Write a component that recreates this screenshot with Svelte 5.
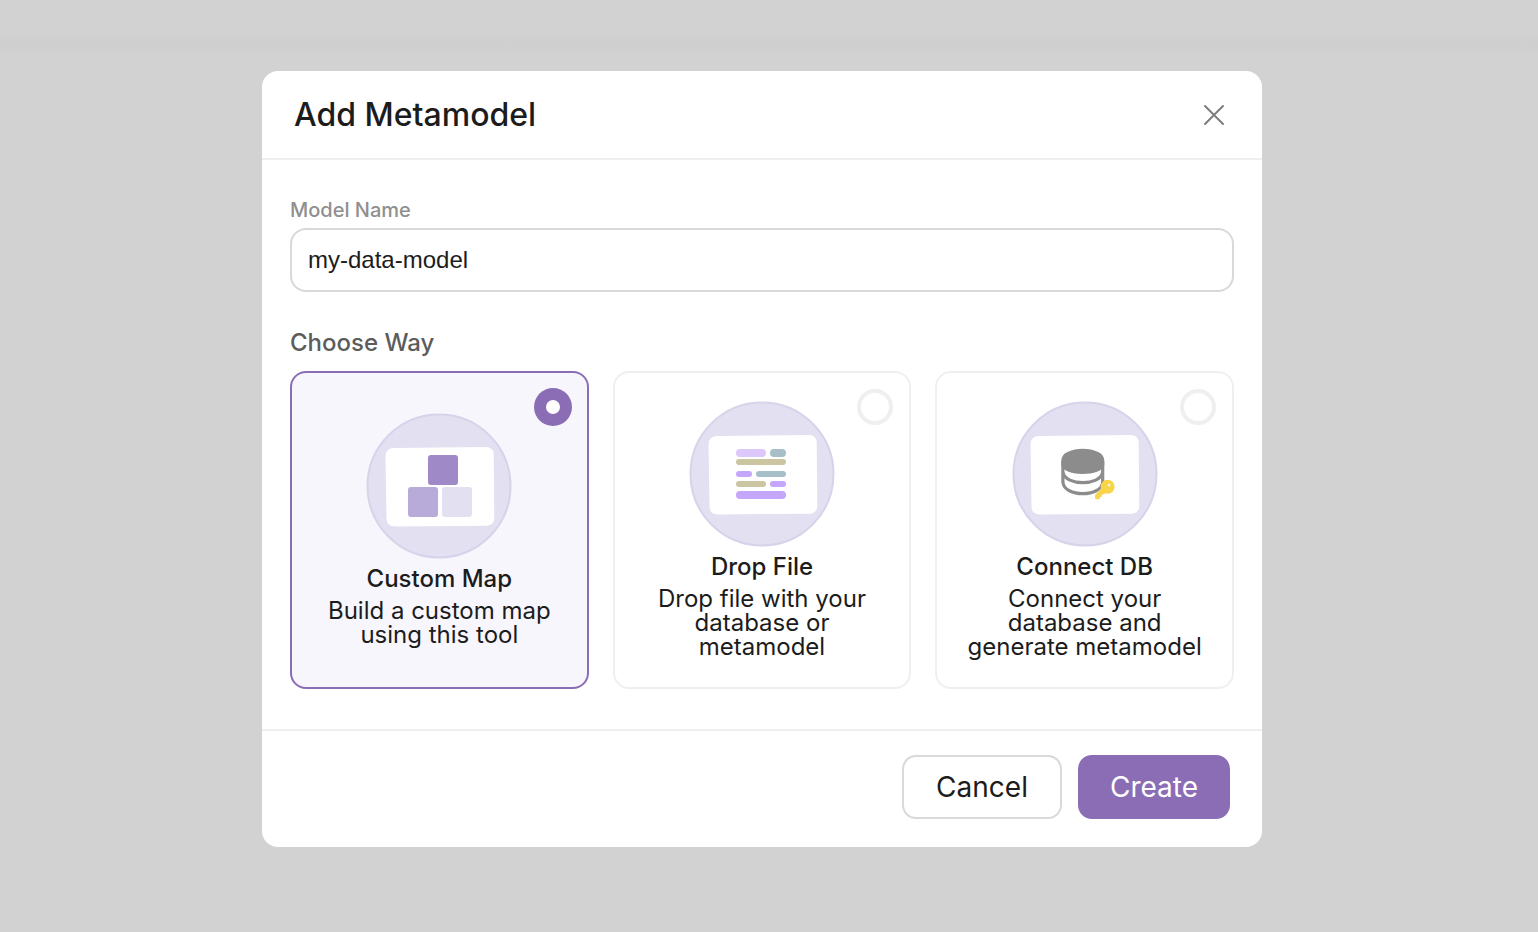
<script>
  let name = $state('my-data-model');
  let way = $state('custom');

  const ways = [
    { id: 'custom', title: 'Custom Map', text: 'Build a custom map using this tool' },
    { id: 'file', title: 'Drop File', text: 'Drop file with your database or metamodel' },
    { id: 'db', title: 'Connect DB', text: 'Connect your database and generate metamodel' }
  ];

  const purple = '#c4a6fa';
  const khaki = '#cbc5a1';
  const teal = '#a6bfc8';
  const bars = [
    [47, 48, 30, 8, '#dcc8fb'],
    [81, 48, 16, 8, teal],
    [47, 58, 50, 6, khaki],
    [47, 70, 16, 6, purple],
    [67, 70, 30, 6, teal],
    [47, 80, 30, 6, khaki],
    [81, 80, 16, 6, purple],
    [47, 90, 50, 8, purple]
  ];
</script>

<div class="overlay">
  <div class="modal" role="dialog" aria-modal="true" aria-labelledby="dialog-title">
    <header>
      <h1 id="dialog-title">Add Metamodel</h1>
      <button class="close" type="button" aria-label="Close">
        <svg viewBox="0 0 24 24" width="24" height="24">
          <path d="M3 3l18 18M21 3l-18 18" fill="none" stroke="#7d7d7d" stroke-width="2" stroke-linecap="round" />
        </svg>
      </button>
    </header>

    <div class="body">
      <label class="name-label" for="model-name">Model Name</label>
      <input class="name" id="model-name" type="text" bind:value={name} />

      <fieldset>
        <legend>Choose Way</legend>
        <div class="cards">
          {#each ways as item (item.id)}
            <label class="card" class:selected={way === item.id}>
              <input class="radio" type="radio" name="way" value={item.id} bind:group={way} />
              <svg class="art" viewBox="0 0 146 146" width="146" height="146" aria-hidden="true">
                <circle cx="73" cy="73" r="71.5" fill="#e3e0f1" stroke="#d8d2ea" stroke-width="2" />
                <path
                  transform={item.id === 'db' ? 'translate(-1 0)' : undefined}
                  d="M28.5 34.9L119.5 34Q127.6 34 127.7 42L128.3 104.5Q128.3 112.5 120.3 112.7L29.5 113.5Q20.6 113.5 20.5 105.5L19.5 43.5Q19.5 35 28.5 34.9Z"
                  fill="#fff"
                />
                {#if item.id === 'custom'}
                  <rect x="62" y="42" width="30" height="30" rx="3" fill="#9f8ac7" />
                  <rect x="42" y="74" width="30" height="30" rx="3" fill="#b8abd9" />
                  <rect x="76" y="74" width="30" height="30" rx="3" fill="#e3e0f1" />
                {:else if item.id === 'file'}
                  {#each bars as [x, y, w, h, fill]}
                    <rect {x} {y} width={w} height={h} rx={h / 2} {fill} />
                  {/each}
                {:else}
                  <g transform="translate(-0.7 -0.5)">
                    <path d="M51.6 61V81.5C52.500 97 90.500 97 91.400 81.500V61" fill="#fff" stroke="#8c8c8c" stroke-width="3.200" />
                    <path d="M51.800 72C54 85.500 89 85.500 91.200 72" fill="none" stroke="#8c8c8c" stroke-width="3.200" />
                    <path d="M50 60C50 44.300 93 44.300 93 60V64.500C91 76.500 52 76.500 50 64.500Z" fill="#8c8c8c" />
                    <path d="M91 87.500L84.300 94.500V98.300H88V96H90V93.500H92.500L94.500 91.500Z" fill="#f8d448" stroke="#f8d448" stroke-linejoin="round" />
                    <circle cx="96.300" cy="86.300" r="7" fill="#f8d448" />
                    <circle cx="97.800" cy="84.600" r="1.500" fill="#fff6cf" />
                  </g>
                {/if}
              </svg>
              <span class="title">{item.title}</span>
              <span class="text">{item.text}</span>
            </label>
          {/each}
        </div>
      </fieldset>
    </div>

    <footer>
      <button class="btn" type="button">Cancel</button>
      <button class="btn primary" type="button">Create</button>
    </footer>
  </div>
</div>

<style>
  :global(body) {
    margin: 0;
    background: #d2d2d2;
  }

  .overlay {
    box-sizing: border-box;
    min-height: 100vh;
    padding: 71px 14px 71px 0;
    background: linear-gradient(#d2d2d2 32px, #cfcfcf 44px, #d2d2d2 60px);
    color: #1c1c1c;
    font-family: Inter, sans-serif;
    font-optical-sizing: none;
  }

  .modal {
    box-sizing: border-box;
    width: 100%;
    max-width: 1000px;
    margin: 0 auto;
    border-radius: 16px;
    background: #fff;
  }

  header {
    display: flex;
    align-items: center;
    justify-content: space-between;
    padding: 24px 32px 23px;
    border-bottom: 2px solid #efefef;
  }

  h1 {
    margin: 0;
    font-size: 32px;
    line-height: 40px;
    font-weight: 500;
  }

  .close {
    display: flex;
    padding: 4px;
    border: 0;
    background: none;
  }

  .body {
    padding: 38px 28px 40px;
  }

  .name-label {
    display: block;
    margin-bottom: 6px;
    color: #8f8f8f;
    font-size: 20px;
    line-height: 24px;
    font-weight: 500;
  }

  .name {
    display: block;
    box-sizing: border-box;
    width: 100%;
    height: 64px;
    padding: 0 16px;
    border: 2px solid #d9d9d9;
    border-radius: 16px;
    background: #fff;
    color: #1c1c1c;
    font-family: "Liberation Sans", Arial, sans-serif;
    font-size: 24px;
  }

  fieldset {
    min-width: 0;
    margin: 39px 0 0;
    padding: 0;
    border: 0;
  }

  legend {
    margin-bottom: 16px;
    padding: 0;
    color: #5c5c5c;
    font-size: 24px;
    line-height: 24px;
    font-weight: 500;
  }

  .cards {
    display: grid;
    grid-template-columns: repeat(3, minmax(0, 1fr));
    gap: 24px;
  }

  .card {
    position: relative;
    display: flex;
    flex-direction: column;
    align-items: center;
    justify-content: center;
    gap: 8px;
    padding: 28px;
    border: 2px solid #efefef;
    border-radius: 16px;
    font-size: 24px;
    line-height: 24px;
    text-align: center;
  }

  .card.selected {
    border-color: #8b6db6;
    background: #f7f6fd;
  }

  .radio {
    position: absolute;
    top: 16px;
    right: 16px;
    box-sizing: border-box;
    width: 36px;
    height: 36px;
    margin: 0;
    border: 4px solid #efefef;
    border-radius: 50%;
    appearance: none;
  }

  .radio:checked {
    border: 11px solid #8b6db6;
    background: #fff;
    box-shadow: 0 0 0 1px #8b6db6;
  }

  .title {
    font-weight: 500;
  }

  footer {
    display: flex;
    justify-content: flex-end;
    gap: 16px;
    padding: 24px 32px 28px;
    border-top: 2px solid #efefef;
  }

  .btn {
    box-sizing: border-box;
    height: 64px;
    padding: 0 32px;
    border: 2px solid #d9d9d9;
    border-radius: 14px;
    background: #fff;
    color: #1c1c1c;
    font: inherit;
    font-size: 28px;
  }

  .btn.primary {
    padding: 0 30px;
    border-color: #8b6db6;
    background: #8b6db6;
    color: #fff;
  }

  @media (max-width: 760px) {
    .overlay {
      padding: 16px;
    }

    .cards {
      grid-template-columns: 1fr;
    }
  }
</style>
